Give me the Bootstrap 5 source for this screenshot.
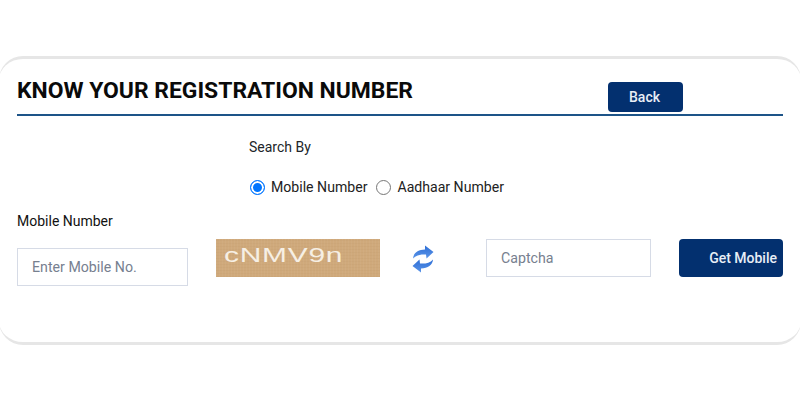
<!DOCTYPE html>
<html lang="en">
<head>
<meta charset="utf-8">
<title>Know Your Registration Number</title>
<link href="https://cdn.jsdelivr.net/npm/bootstrap@5.3.0/dist/css/bootstrap.min.css" rel="stylesheet">
<style>
html, body { background: #fff; font-family: Roboto, "Liberation Sans", sans-serif; color: #212529; overflow: hidden; }
.page-wrap { padding-top: 56px; }
.reg-panel { height: 289px; border-style: solid; border-color: #e6e6e6; border-width: 3px 0; border-radius: 24px; padding: 0 18px; margin: 0 -1px; background: #fff; }
.reg-head { height: 57px; border-bottom: 2px solid #1d5488; }
.reg-title { font-size: 22.9px; font-weight: 700; line-height: 28px; color: #0a0a0a; margin: 18px 0 0; }
.btn-navy { background: #03306f; border: 0; color: #e8eef6; font-size: 14px; font-weight: 500; border-radius: 4px; height: 30px; padding: 0; }
.btn-navy:hover { background: #03306f; color: #e8eef6; }
.btn-back { width: 75px; margin: 23px 100px 0 0; padding-right: 2px; }
.search-box { margin-left: 232px; padding-top: 22px; font-size: 14px; }
.search-cap { line-height: 18px; margin-bottom: 22px; }
.radio-line { height: 18px; }
.radio-line .form-check-input { width: 15px; height: 15px; margin: 0 6px 0 1px; border-color: #767676; }
.radio-line .form-check-input:checked { background-image: none; background-color: #0075ff; border: 1.5px solid #0075ff; box-shadow: inset 0 0 0 2px #fff; }
.radio-line .form-check-label { margin-right: 8px; font-size: 14.1px; line-height: 18px; color: #222; }
.form-line { margin-top: 16px; }
.field-mobile { width: 171px; margin-right: 28px; }
.field-label { font-size: 14px; line-height: 18px; margin-bottom: 18px; color: #111; }
.entry { height: 38px; border: 1px solid #d6dbe6; border-radius: 0; font-size: 14.2px; padding: 0 14px; color: #555; }
.entry::placeholder { color: #77808f; opacity: 1; }
.field-top { margin-top: 27px; }
.captcha-pic { width: 164px; height: 38px; overflow: hidden; background-color: #cfa97b; background-image: repeating-linear-gradient(90deg, rgba(255,255,255,.035) 0 1px, transparent 1px 3px), repeating-linear-gradient(0deg, rgba(120,80,30,.035) 0 1px, transparent 1px 3px); color: #f6efe4; font-family: "Liberation Sans", sans-serif; font-size: 20.5px; letter-spacing: .5px; line-height: 31px; padding-left: 8px; margin-right: 32px; }
.captcha-word { display: inline-block; transform: scaleX(1.46); transform-origin: left center; }
.refresh-icon { width: 22px; height: 28px; margin: 33px 52px 0 0; display: block; flex: none; }
.field-captcha { width: 165px; margin-right: 28px; }
.btn-mobile { width: 104px; height: 38px; text-align: right; padding-right: 6px; }
</style>
</head>
<body>
<div class="page-wrap">
  <div class="reg-panel">
    <div class="reg-head d-flex justify-content-between align-items-start">
      <h1 class="reg-title">KNOW YOUR REGISTRATION NUMBER</h1>
      <button type="button" class="btn btn-navy btn-back">Back</button>
    </div>
    <div class="search-box">
      <div class="search-cap">Search By</div>
      <div class="radio-line d-flex align-items-center">
        <input class="form-check-input mt-0" type="radio" name="by" id="rMobile" checked>
        <label class="form-check-label" for="rMobile">Mobile Number</label>
        <input class="form-check-input mt-0" type="radio" name="by" id="rAadhaar">
        <label class="form-check-label" for="rAadhaar">Aadhaar Number</label>
      </div>
    </div>
    <div class="form-line d-flex align-items-start">
      <div class="field-mobile">
        <div class="field-label">Mobile Number</div>
        <input type="text" class="form-control entry" placeholder="Enter Mobile No.">
      </div>
      <div class="captcha-pic field-top"><span class="captcha-word">cNMV9n</span></div>
      <svg class="refresh-icon" viewBox="0 0 22 28" aria-hidden="true">
        <defs>
          <linearGradient id="arrowShade" x1="0" y1="0" x2="0" y2="1">
            <stop offset="0" stop-color="#2f6fd6"/>
            <stop offset="1" stop-color="#5a94e8"/>
          </linearGradient>
        </defs>
        <path fill="url(#arrowShade)" d="M1 13.500 C1.500 8 6 4.800 13 4.500 L13 0.500 L21.500 7 L14.500 13.500 L14 9.500 C9 9 4 10 1 13.500 Z"/>
        <path fill="url(#arrowShade)" d="M21 14.500 C20.500 20 16 23.200 9 23.500 L9 27.500 L0.500 21 L7.500 14.500 L8 18.500 C13 19 18 18 21 14.500 Z"/>
      </svg>
      <input type="text" class="form-control entry field-captcha field-top" placeholder="Captcha">
      <button type="button" class="btn btn-navy btn-mobile field-top">Get Mobile</button>
    </div>
  </div>
</div>
<script src="https://cdn.jsdelivr.net/npm/bootstrap@5.3.0/dist/js/bootstrap.bundle.min.js"></script>
</body>
</html>
